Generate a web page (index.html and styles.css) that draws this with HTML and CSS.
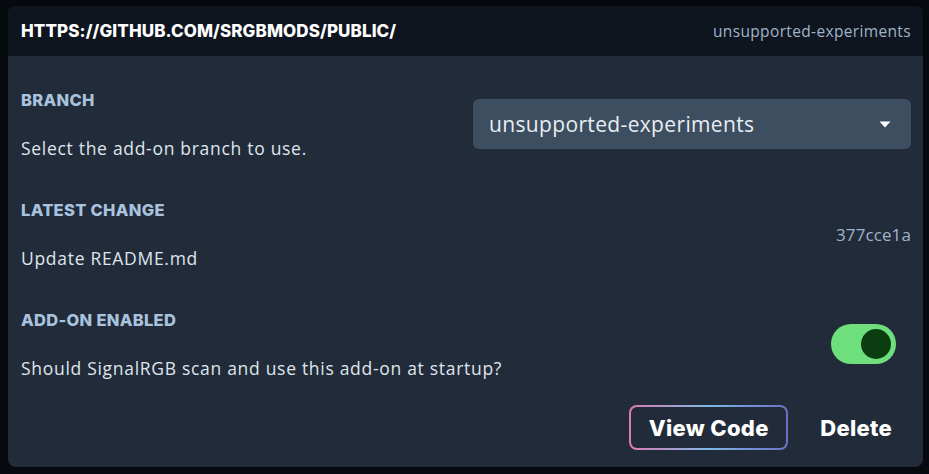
FILE: index.html
```html
<!DOCTYPE html>
<html>
<head>
<meta charset="utf-8">
<link rel="stylesheet" href="styles.css">
</head>
<body>
<div class="card">
  <div class="card-header">
    <div class="repo-url">HTTPS://GITHUB.COM/SRGBMODS/PUBLIC/</div>
    <div class="repo-branch">unsupported-experiments</div>
  </div>
  <div class="card-body">
    <div class="setting">
      <div class="setting-text">
        <div class="setting-label">BRANCH</div>
        <div class="setting-desc">Select the add-on branch to use.</div>
      </div>
      <div class="select">
        <span class="select-value">unsupported-experiments</span>
        <svg class="caret" width="12" height="7" viewBox="0 0 12 7"><path d="M0.5 0.5 L11.5 0.5 L6 6.5 Z" fill="#ffffff"/></svg>
      </div>
    </div>
    <div class="setting">
      <div class="setting-text">
        <div class="setting-label">LATEST CHANGE</div>
        <div class="setting-desc">Update README.md</div>
      </div>
      <div class="commit">377cce1a</div>
    </div>
    <div class="setting">
      <div class="setting-text">
        <div class="setting-label">ADD-ON ENABLED</div>
        <div class="setting-desc">Should SignalRGB scan and use this add-on at startup?</div>
      </div>
      <div class="toggle"><div class="knob"></div></div>
    </div>
    <div class="actions">
      <button class="btn-gradient"><span>View Code</span></button>
      <button class="btn-plain">Delete</button>
    </div>
  </div>
</div>
</body>
</html>
```
FILE: styles.css
```css
html, body {
  margin: 0;
  padding: 0;
  background: #06090e;
}
body {
  padding: 6px 6px 7px 8px;
  font-family: "Open Sans", sans-serif;
}
.card {
  background: #222b39;
  border-radius: 8px;
  overflow: hidden;
}
.card-header {
  background: #0f151e;
  height: 50px;
  display: flex;
  align-items: center;
  justify-content: space-between;
  padding: 0 12px 0 13px;
}
.repo-url {
  font-family: "Inter", sans-serif;
  font-weight: 800;
  font-size: 17px;
  color: #ffffff;
  letter-spacing: 0.1px;
}
.repo-branch {
  font-size: 15.5px;
  letter-spacing: 0.35px;
  color: #9fb4ca;
}
.card-body {
  padding: 32px 12px 17px 13px;
  display: flex;
  flex-direction: column;
}
.setting {
  display: flex;
  align-items: center;
  justify-content: space-between;
  margin-bottom: 38px;
}
.setting:nth-child(3) {
  margin-bottom: 25px;
}
.setting-text {
  display: flex;
  flex-direction: column;
  gap: 24px;
}
.setting-label {
  font-family: "Inter", sans-serif;
  font-weight: 800;
  font-size: 16.5px;
  line-height: 24px;
  letter-spacing: 0.3px;
  color: #a9c3de;
}
.setting-desc {
  font-size: 17.5px;
  line-height: 24px;
  letter-spacing: 0.7px;
  color: #dfe5ec;
}
.select {
  width: 438px;
  height: 50px;
  box-sizing: border-box;
  background: #3d4e60;
  border-radius: 6px;
  display: flex;
  align-items: center;
  justify-content: space-between;
  padding: 0 20px 0 16px;
}
.select-value {
  font-size: 21px;
  letter-spacing: 0.35px;
  color: #e8edf2;
}
.commit {
  font-size: 17px;
  letter-spacing: 0.1px;
  color: #9fb4ca;
}
.toggle {
  width: 65px;
  height: 40px;
  border-radius: 20px;
  background: #6fdf7e;
  box-sizing: border-box;
  padding: 5px;
  display: flex;
  justify-content: flex-end;
  margin-right: 15px;
}
.knob {
  width: 30px;
  height: 30px;
  border-radius: 50%;
  background: #0b3d10;
}
.actions {
  display: flex;
  justify-content: flex-end;
  align-items: center;
  gap: 32px;
  padding-right: 19px;
}
button {
  font-family: "Inter", sans-serif;
  font-weight: 800;
  font-size: 22px;
  letter-spacing: 0.3px;
  color: #ffffff;
  border: none;
  cursor: pointer;
}
.btn-gradient {
  width: 159px;
  height: 45px;
  border-radius: 8px;
  padding: 2px;
  background: linear-gradient(90deg, #e07ab0 0%, #7db8e6 50%, #6a6fc8 100%);
}
.btn-gradient span {
  display: flex;
  align-items: center;
  justify-content: center;
  width: 100%;
  height: 100%;
  background: #222b39;
  border-radius: 6px;
}
.btn-plain {
  background: transparent;
  padding: 0;
}
```
